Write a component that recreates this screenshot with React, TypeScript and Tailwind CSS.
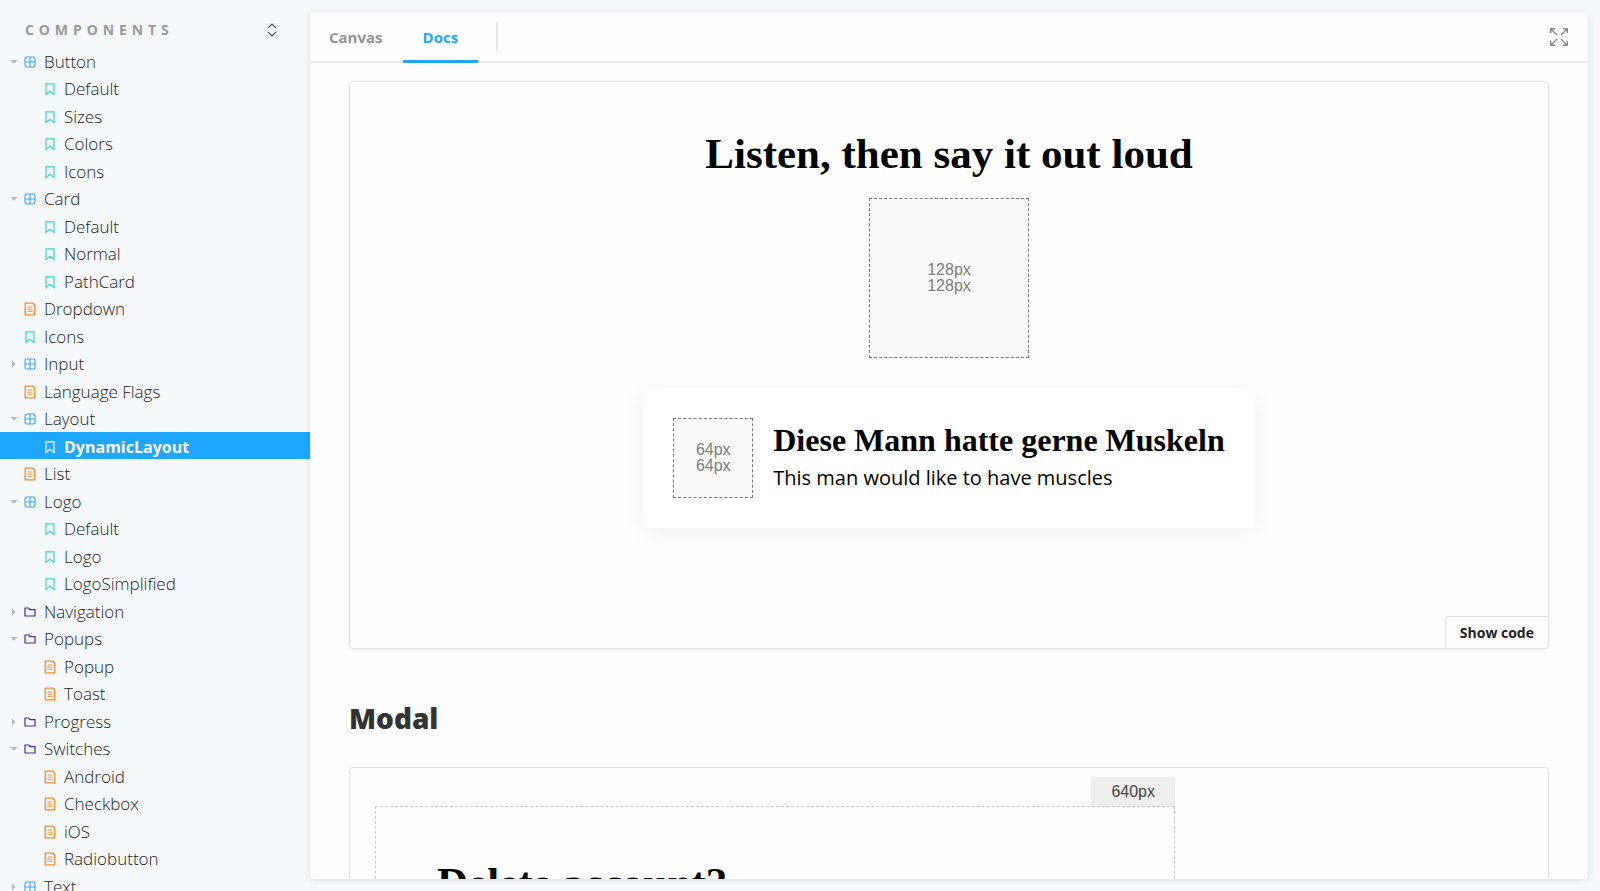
import { useState } from "react";

type Kind = "component" | "story" | "document" | "folder";

interface TreeItem {
  label: string;
  kind: Kind;
  nested?: boolean;
  open?: boolean;
}

const items: TreeItem[] = [
  { label: "Button", kind: "component", open: true },
  { label: "Default", kind: "story", nested: true },
  { label: "Sizes", kind: "story", nested: true },
  { label: "Colors", kind: "story", nested: true },
  { label: "Icons", kind: "story", nested: true },
  { label: "Card", kind: "component", open: true },
  { label: "Default", kind: "story", nested: true },
  { label: "Normal", kind: "story", nested: true },
  { label: "PathCard", kind: "story", nested: true },
  { label: "Dropdown", kind: "document" },
  { label: "Icons", kind: "story" },
  { label: "Input", kind: "component", open: false },
  { label: "Language Flags", kind: "document" },
  { label: "Layout", kind: "component", open: true },
  { label: "DynamicLayout", kind: "story", nested: true },
  { label: "List", kind: "document" },
  { label: "Logo", kind: "component", open: true },
  { label: "Default", kind: "story", nested: true },
  { label: "Logo", kind: "story", nested: true },
  { label: "LogoSimplified", kind: "story", nested: true },
  { label: "Navigation", kind: "folder", open: false },
  { label: "Popups", kind: "folder", open: true },
  { label: "Popup", kind: "document", nested: true },
  { label: "Toast", kind: "document", nested: true },
  { label: "Progress", kind: "folder", open: false },
  { label: "Switches", kind: "folder", open: true },
  { label: "Android", kind: "document", nested: true },
  { label: "Checkbox", kind: "document", nested: true },
  { label: "iOS", kind: "document", nested: true },
  { label: "Radiobutton", kind: "document", nested: true },
  { label: "Text", kind: "component", open: false },
];

function KindIcon({ kind, selected }: { kind: Kind; selected: boolean }) {
  const common = { width: 12, height: 14, viewBox: "0 0 12 14", fill: "none", "aria-hidden": true } as const;
  if (kind === "component") {
    return (
      <svg {...common} className="shrink-0 text-[#3ba3f7]" stroke="currentColor" strokeWidth="1.1">
        <rect x="1" y="2" width="10" height="10" rx="1.8" />
        <path d="M6 2v10M1 7h10" />
      </svg>
    );
  }
  if (kind === "story") {
    return (
      <svg {...common} className={selected ? "shrink-0 text-white" : "shrink-0 text-[#37d5d3]"} stroke="currentColor" strokeWidth="1.2">
        <path d="M2 1.8h8v10.6L6 9.2l-4 3.2z" />
      </svg>
    );
  }
  if (kind === "document") {
    return (
      <svg {...common} className="shrink-0 text-[#f58a1f]" stroke="currentColor">
        <path d="M1.2 1.2h7.6l2 2v9.6H1.2z" strokeWidth="1.3" />
        <path d="M3.4 5h4.8M3.4 7.2h5.2M3.4 9.4h5.2" strokeWidth="0.9" />
      </svg>
    );
  }
  return (
    <svg {...common} className="shrink-0 text-[#3d2fa3]" stroke="currentColor" strokeWidth="1.2">
      <path d="M1 11V3h3.6l1.2 1.6H11V11z" />
    </svg>
  );
}

function Caret({ open }: { open?: boolean }) {
  return (
    <svg width="8" height="8" viewBox="0 0 8 8" className="shrink-0 text-[#b4b8bc]" fill="currentColor" aria-hidden="true">
      {open === true && <path d="M0.6 2h6.8L4 5.8z" />}
      {open === false && <path d="M2 0.6v6.8L5.6 4z" />}
    </svg>
  );
}

function Placeholder({ size, className }: { size: number; className: string }) {
  return (
    <div
      className={`flex shrink-0 flex-col items-center justify-center border border-dashed border-[#777] bg-[#fafafa] font-['Liberation_Sans',sans-serif] text-base leading-4 text-[#7d7d7d] ${className}`}
    >
      <span>{size}px</span>
      <span>{size}px</span>
    </div>
  );
}

function Sidebar() {
  const [selected, setSelected] = useState(14);
  return (
    <nav aria-label="Components" className="w-[310px] shrink-0 overflow-hidden">
      <div className="flex h-[47px] items-center justify-between pt-3 pr-8 pl-[25px]">
        <h2 className="text-sm font-bold tracking-[0.35em] text-[#999]">COMPONENTS</h2>
        <button type="button" aria-label="Expand or collapse all" className="text-[#444]">
          <svg width="12" height="14" viewBox="0 0 12 14" fill="none" stroke="currentColor" strokeWidth="1.1" aria-hidden="true">
            <path d="M2.2 4.8L6 1l3.8 3.8M2.2 9.2L6 13l3.8-3.8" />
          </svg>
        </button>
      </div>
      <ul>
        {items.map((item, i) => {
          const active = i === selected;
          return (
            <li key={i} className="odd:h-[27px] even:h-7">
              <button
                type="button"
                onClick={() => setSelected(i)}
                className={`flex h-full w-full items-center pt-0.5 text-left leading-6 ${
                  item.nested ? "pl-[30px]" : "pl-2.5"
                } ${active ? "bg-[#1ea7fd] text-base font-bold text-white" : "text-[17px] font-light text-[#222]"}`}
              >
                <Caret open={item.open} />
                <span className="ml-1.5 flex">
                  <KindIcon kind={item.kind} selected={active} />
                </span>
                <span className="ml-2">{item.label}</span>
              </button>
            </li>
          );
        })}
      </ul>
    </nav>
  );
}

export default function App() {
  return (
    <div className="flex h-screen overflow-hidden bg-[#f6f9fc] font-['Open_Sans','Noto_Sans',sans-serif] text-[#333]">
      <Sidebar />
      <div className="min-w-0 flex-1 pt-3 pr-3 pb-3">
        <main className="flex h-full flex-col overflow-hidden rounded bg-[#fefefe] shadow-[0_1px_6px_rgba(0,20,40,0.12)]">
          <header className="flex h-[51px] shrink-0 items-stretch border-b-2 border-[#ebebeb]">
            <div role="tablist" className="-mb-0.5 flex text-[15px] font-bold">
              <button type="button" role="tab" aria-selected="false" className="border-b-3 border-transparent pt-[3px] pr-5 pl-[19px] text-[#949494]">
                Canvas
              </button>
              <button type="button" role="tab" aria-selected="true" className="border-b-3 border-[#1ea7fd] px-5 pt-[3px] text-[#1ea7fd]">
                Docs
              </button>
            </div>
            <div className="my-2.5 ml-[18px] w-0.5 bg-[#e6e6e6]" />
            <button type="button" aria-label="Go full screen" className="mr-[19px] ml-auto text-[#8a8a8a]">
              <svg width="20" height="20" viewBox="0 0 20 20" fill="none" stroke="currentColor" strokeWidth="1.4" aria-hidden="true">
                <path d="M8 8L2 2M1.7 6V1.7H6M12 8l6-6M14 1.7h4.3V6M8 12l-6 6M1.7 14v4.3H6M12 12l6 6M14 18.3h4.3V14" />
              </svg>
            </button>
          </header>

          <div className="min-h-0 flex-1 overflow-hidden px-[39px] pt-[18px]">
            <section className="flex flex-col rounded border border-[#e2e2e2] shadow-[0_1px_3px_rgba(0,0,0,0.08)]">
              <div className="flex flex-col items-center pt-[42px] pb-22 text-black">
                <h1 className="font-['Liberation_Serif',serif] text-[43px] leading-[60px] font-bold">
                  Listen, then say it out loud
                </h1>
                <Placeholder size={128} className="mt-3.5 size-40" />
                <div className="mt-[30px] flex items-center gap-5 bg-white p-[30px] shadow-[0_4px_20px_rgba(0,0,0,0.06)]">
                  <Placeholder size={64} className="size-20" />
                  <div>
                    <h2 className="font-['Liberation_Serif',serif] text-[32px] leading-10 font-bold">
                      Diese Mann hatte gerne Muskeln
                    </h2>
                    <p className="text-xl leading-9">This man would like to have muscles</p>
                  </div>
                </div>
              </div>
              <button
                type="button"
                className="h-8 self-end rounded-tl border-t border-l border-[#e2e2e2] px-3.5 text-sm font-bold text-[#222]"
              >
                Show code
              </button>
            </section>

            <h2 className="mt-[49px] text-[28px] leading-10 font-extrabold">Modal</h2>

            <section className="mt-[29px] rounded border border-[#e2e2e2] px-[25px] pt-[9px]">
              <div className="w-[800px]">
                <div className="flex justify-end">
                  <span className="bg-[#eee] px-5 py-[3px] font-['Liberation_Sans',sans-serif] text-base leading-[23px] text-[#444]">
                    640px
                  </span>
                </div>
                <div className="border border-dashed border-[#ccc] px-[61px] pt-[46px] pb-16">
                  <h1 className="font-['Liberation_Serif',serif] text-[43px] leading-[60px] font-bold text-black">
                    Delete account?
                  </h1>
                </div>
              </div>
            </section>
          </div>
        </main>
      </div>
    </div>
  );
}
